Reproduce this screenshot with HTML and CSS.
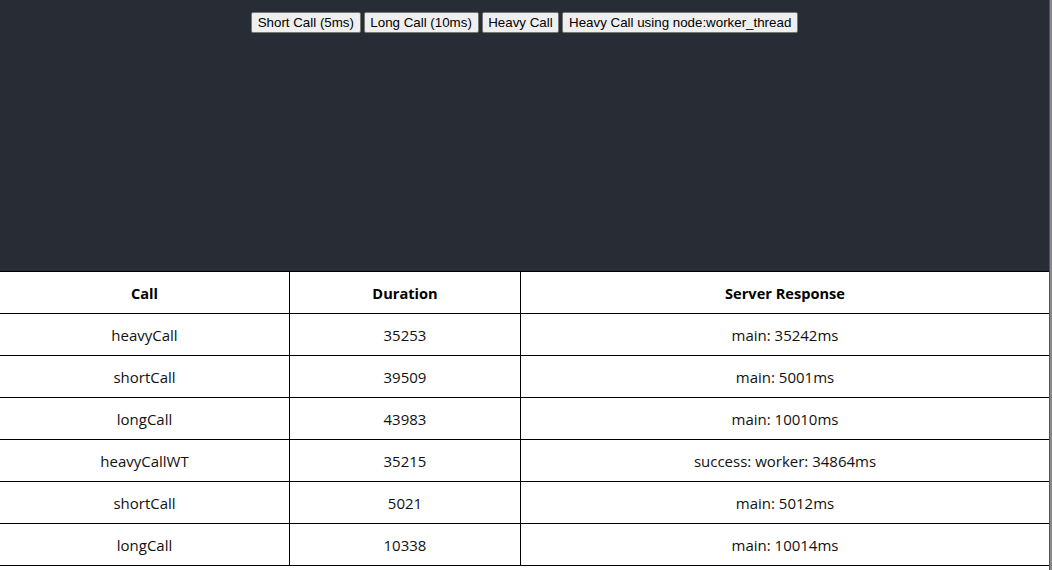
FILE: index.html
```html
<!DOCTYPE html>
<html>
<head>
<meta charset="utf-8">
<link rel="stylesheet" href="styles.css">
</head>
<body>
<div class="page">
  <main class="app">
    <header class="app-header">
      <div class="controls">
        <button class="btn">Short Call (5ms)</button>
        <button class="btn">Long Call (10ms)</button>
        <button class="btn">Heavy Call</button>
        <button class="btn">Heavy Call using node:worker_thread</button>
      </div>
    </header>
    <table class="results">
      <colgroup>
        <col class="c1"><col class="c2"><col class="c3">
      </colgroup>
      <thead>
        <tr><th>Call</th><th>Duration</th><th>Server Response</th></tr>
      </thead>
      <tbody>
        <tr><td>heavyCall</td><td>35253</td><td>main: 35242ms</td></tr>
        <tr><td>shortCall</td><td>39509</td><td>main: 5001ms</td></tr>
        <tr><td>longCall</td><td>43983</td><td>main: 10010ms</td></tr>
        <tr><td>heavyCallWT</td><td>35215</td><td>success: worker: 34864ms</td></tr>
        <tr><td>shortCall</td><td>5021</td><td>main: 5012ms</td></tr>
        <tr><td>longCall</td><td>10338</td><td>main: 10014ms</td></tr>
      </tbody>
    </table>
  </main>
  <div class="scrollbar"></div>
</div>
</body>
</html>
```
FILE: styles.css
```css
html, body {
  margin: 0;
  padding: 0;
  background: #ffffff;
}
.page {
  display: flex;
  width: 1052px;
  height: 570px;
  overflow: hidden;
}
.app {
  flex: 1;
  min-width: 0;
  overflow: hidden;
}
.app-header {
  background: #282c34;
  height: 271px;
  box-sizing: border-box;
  padding-top: 12px;
}
.controls {
  display: flex;
  justify-content: center;
  gap: 3px;
}
.btn {
  font-family: "Liberation Sans", Arial, sans-serif;
  font-size: 13.33px;
  color: #000;
  background: #efefef;
  border: 1px solid #767676;
  border-radius: 2px;
  padding: 0 5.7px;
  height: 21px;
  line-height: 19px;
  margin: 0;
}
.results {
  border-collapse: collapse;
  width: 1050px;
  margin-left: -1px;
  table-layout: fixed;
  font-family: "Open Sans", "Noto Sans", sans-serif;
  font-size: 15px;
  color: #000;
}
.c1 { width: 290px; }
.c2 { width: 231px; }
.c3 { width: 529px; }
.results th, .results td {
  border: 1px solid #000;
  height: 42px;
  padding: 0;
  text-align: center;
  box-sizing: border-box;
  vertical-align: middle;
}
.results th {
  font-weight: 700;
  font-size: 14.6px;
}
.results td {
  font-weight: 400;
  color: #111;
}
.scrollbar {
  width: 3px;
  flex: none;
  background: #8a8a8a;
  border-left: 1px solid #555;
  box-sizing: border-box;
}
```
